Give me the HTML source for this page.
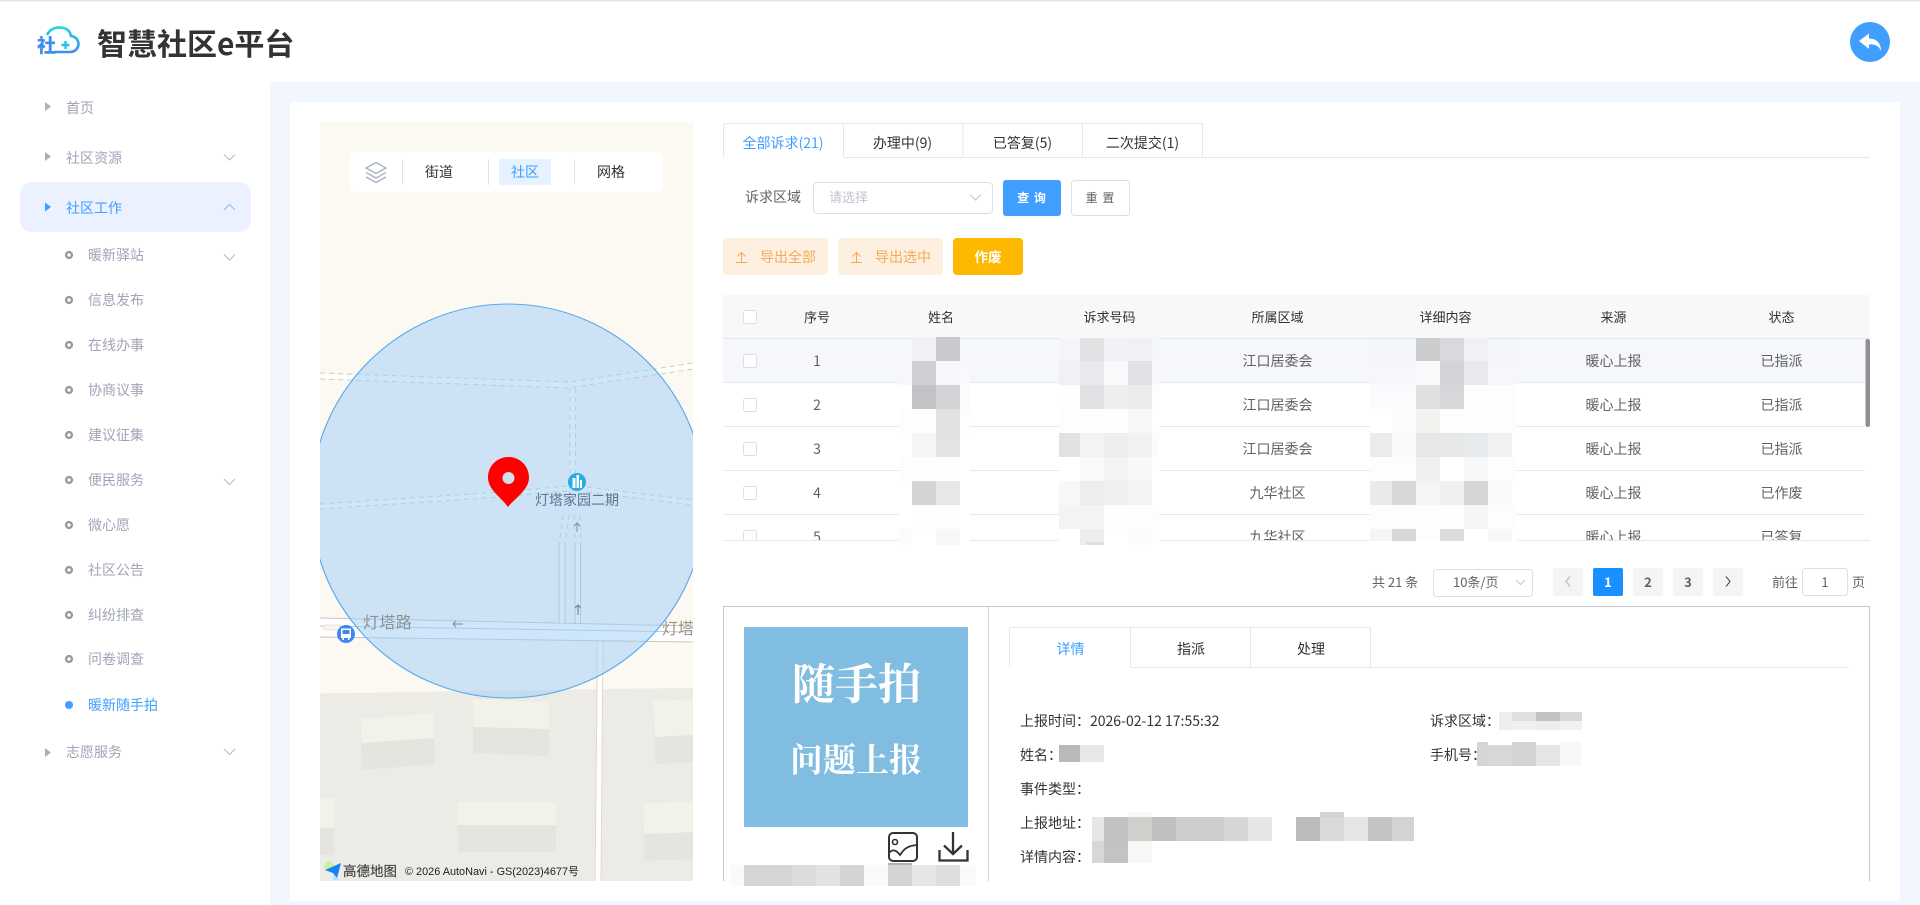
<!DOCTYPE html>
<html lang="zh-CN">
<head>
<meta charset="utf-8">
<title>智慧社区e平台</title>
<style>
html,body{margin:0;padding:0;background:#fff;width:1920px;height:905px;overflow:hidden}
svg{display:block;position:absolute;left:0;top:0}
text{font-family:"Noto Sans CJK SC","Liberation Sans",sans-serif;font-size:14px;white-space:pre}
.m{text-anchor:middle}
.nav{fill:#a0a4b7}
.h{font-size:13px;fill:#303133;text-anchor:middle}
.r{fill:#606266;text-anchor:middle}
.d{fill:#333}
.cb{fill:#fff;stroke:#dcdfe6;stroke-width:1}
.ch{fill:none;stroke:#b4b9c9;stroke-width:1}
.sep{stroke:#dfe4ec;stroke-width:1}
</style>
</head>
<body>
<svg width="1920" height="905" viewBox="0 0 1920 905" xmlns="http://www.w3.org/2000/svg">
<defs>
<clipPath id="mapc"><rect x="320" y="122" width="373" height="759"/></clipPath>
<clipPath id="tblc"><rect x="723" y="339" width="1147" height="201"/></clipPath>
<clipPath id="detc"><rect x="1010" y="700" width="850" height="163"/></clipPath>
<linearGradient id="cl" x1="0" y1="0" x2="0" y2="1"><stop offset="0" stop-color="#1fd3e6"/><stop offset="1" stop-color="#3d8ff2"/></linearGradient>
</defs>

<!-- page frame -->
<rect x="0" y="0" width="1920" height="905" fill="#fff"/>
<rect x="0" y="0" width="1920" height="1.5" fill="#e4e4e4"/>
<rect x="270" y="82" width="1650" height="823" fill="#f2f6fe"/>
<rect x="290" y="102" width="1610" height="799" fill="#fff"/>

<!-- logo -->
<path d="M47 35C49 31 53 27.5 59 27.5C65 27.5 70 30 71 36C74 36 78.5 39 78.5 44C78.5 47 76 52 70 52H54" fill="none" stroke="url(#cl)" stroke-width="2.6"/>
<text x="37" y="52" style="font-size:19px;font-weight:900;fill:#3f8ff0" transform="translate(0 0)">社</text>
<path d="M65.500 41V49M61.500 45H69.500" stroke="#22c4e8" stroke-width="2.400" fill="none"/>
<text x="97" y="55" style="font-size:30px;font-weight:700;fill:#333">智慧社区e平台</text>

<!-- back -->
<circle cx="1870" cy="42" r="20" fill="#409eff"/>
<path d="M1859 41L1869 33.500V38.500C1877 38.500 1881 44 1881 51C1879 46 1875 44 1869 44.500V49Z" fill="#fff"/>

<!-- sidebar -->
<rect x="20" y="182" width="231" height="50" rx="12" fill="#ebf1fe"/>
<path d="M45 102L51 106.500L45 111Z" fill="#a8afc0"/>
<path d="M45 152L51 156.500L45 161Z" fill="#a8afc0"/>
<path d="M45 202.500L51 207L45 211.500Z" fill="#409eff"/>
<path d="M45 748L51 752.500L45 757Z" fill="#a8afc0"/>
<text class="nav" x="66" y="113">首页</text>
<text class="nav" x="66" y="163">社区资源</text>
<text x="66" y="213" style="fill:#409eff">社区工作</text>
<text class="nav" x="88" y="260">暖新驿站</text>
<text class="nav" x="88" y="305">信息发布</text>
<text class="nav" x="88" y="350">在线办事</text>
<text class="nav" x="88" y="395">协商议事</text>
<text class="nav" x="88" y="440">建议征集</text>
<text class="nav" x="88" y="485">便民服务</text>
<text class="nav" x="88" y="530">微心愿</text>
<text class="nav" x="88" y="575">社区公告</text>
<text class="nav" x="88" y="620">纠纷排查</text>
<text class="nav" x="88" y="664">问卷调查</text>
<text x="88" y="710" style="fill:#409eff">暖新随手拍</text>
<text class="nav" x="66" y="757">志愿服务</text>
<g fill="none" stroke="#999" stroke-width="2.400">
<circle cx="69" cy="255" r="2.900"/><circle cx="69" cy="300" r="2.900"/><circle cx="69" cy="345" r="2.900"/><circle cx="69" cy="390" r="2.900"/><circle cx="69" cy="435" r="2.900"/><circle cx="69" cy="480" r="2.900"/><circle cx="69" cy="525" r="2.900"/><circle cx="69" cy="570" r="2.900"/><circle cx="69" cy="615" r="2.900"/><circle cx="69" cy="659" r="2.900"/>
</g>
<circle cx="69" cy="705" r="4" fill="#409eff"/>
<polyline class="ch" points="224,154.500 229.500,160 235,154.500"/>
<polyline class="ch" points="224,210 229.500,204.500 235,210" style="stroke:#8db8f5"/>
<polyline class="ch" points="224,254.500 229.500,260 235,254.500"/>
<polyline class="ch" points="224,479 229.500,484.500 235,479"/>
<polyline class="ch" points="224,749 229.500,754.500 235,749"/>

<!-- map -->
<g clip-path="url(#mapc)">
<rect x="320" y="122" width="373" height="759" fill="#fcf9f2"/>
<!-- ground -->
<path d="M320 693.500L597 689V881H320Z" fill="#ecebe6"/>
<path d="M602 689L693 688V881H600Z" fill="#ecebe6"/>
<!-- buildings -->
<g fill="#e5e4df">
<path d="M360 719L433 713L435 764L362 770Z"/><path d="M473 699L549 702V756L473 753Z"/><path d="M653 701L693 699V762L655 764Z"/><path d="M320 798H334V855H320Z"/><path d="M458 802H556V852H458Z"/><path d="M643 803L693 802V859L644 861Z"/>
</g>
<g fill="#f2f1ea">
<path d="M360 719L433 713L434 738L362 743Z"/><path d="M473 699L549 702V729L473 727Z"/><path d="M653 701L693 699V735L655 737Z"/><path d="M320 798H334V828H320Z"/><path d="M458 802H556V825H458Z"/><path d="M643 803L693 802V832L644 834Z"/>
</g>
<!-- roads -->
<path d="M320 376L572 385L693 366M320 506.500L500 494.500L570 487L590 489L693 502.500M572.500 385V488" fill="none" stroke="#fff" stroke-opacity=".75" stroke-width="5"/>
<g fill="none" stroke="#cfccbf" stroke-width="1" stroke-dasharray="5 4">
<path d="M320 373L570 382L693 363M320 379L568 388L693 369"/>
<path d="M320 504L500 492L567 486M320 509L500 497L567 491M587 487L693 500M587 492L693 505"/>
<path d="M570 388V487M575.500 388V487"/>
<path d="M563 515L559 545M569 515L565 545M574 515L575 545M580 515L581 545"/>
</g>
<path d="M598 638H602.500L601 881H595.500Z" fill="#fff"/>
<path d="M597.500 640L595 881M603 640L601 881" fill="none" stroke="#e0dacb" stroke-width="1"/>
<path d="M320 618L693 626V642L320 637Z" fill="#fff"/>
<path d="M320 618L693 626M320 637L693 642M320 626L693 632" fill="none" stroke="#c9c5b8" stroke-width="1"/>
<rect x="324" y="625" width="16" height="5" fill="#f8f5ec" stroke="#dfdccf" stroke-width=".7"/>
<rect x="559" y="545" width="6" height="78" fill="#fbfbfb"/>
<rect x="575" y="545" width="5.500" height="78" fill="#fff"/>
<path d="M559 545V623M565 545V623M575 545V623M580.500 545V624" stroke="#c4c2b6" stroke-width="1" fill="none"/>
<!-- radius -->
<circle cx="508" cy="501" r="197" fill="#9ecdf8" fill-opacity=".5" stroke="#55a9f0" stroke-width="1.100"/>
<!-- labels -->
<text x="363" y="628" style="font-size:16px;letter-spacing:.4px;fill:#8b9298">灯塔路</text>
<text x="662" y="634" style="font-size:16px;fill:#9c978c">灯塔</text>
<path d="M463 624H453M456 621L453 624L456 627" fill="none" stroke="#7e8da0" stroke-width="1"/>
<path d="M577 532V523M574 526L577 523L580 526" fill="none" stroke="#7e8da0" stroke-width="1"/>
<path d="M578 615V605M575 608L578 605L581 608" fill="none" stroke="#7e8da0" stroke-width="1.300"/>
<circle cx="577" cy="482" r="9" fill="#25ade6"/>
<path d="M572.500 488V478H575.500V488ZM576.500 488V475H579V488ZM580 488V480H582V488Z" fill="#fff"/>
<text class="m" x="577" y="505" style="fill:#5b7590">灯塔家园二期</text>
<circle cx="346" cy="634" r="9" fill="#3f86f5"/>
<path d="M341 628.500H351V638H349.500V640H348V638H344V640H342.500V638H341Z" fill="#fff"/>
<rect x="342.500" y="630" width="7" height="4" fill="#3f86f5"/>
<!-- pin -->
<path d="M508 507C502 498 488 490 488 477.500C488 466 497 457 508.500 457C520 457 529 466 529 477.500C529 490 515 498 508 507Z" fill="#f00"/>
<circle cx="508.500" cy="478" r="6" fill="#cfdfee"/>
<!-- amap -->
<circle cx="329" cy="866" r="5" fill="#c9f0a5"/>
<path d="M341 863L337 878L333 873L325 870Z" fill="#1582f5"/>
<path d="M333 873L337 878L339 880L333 880Z" fill="#a6e6ff"/>
<text x="343" y="876" style="font-size:13.500px;fill:#444;stroke:#444;stroke-width:.2">高德地图</text>
<text x="405" y="875" style="font-family:'Liberation Sans','Noto Sans CJK SC',sans-serif;font-size:10.900px;fill:#222">© 2026 AutoNavi - GS(2023)4677号</text>
</g>

<!-- map control -->
<rect x="349" y="152" width="314" height="40" rx="6" fill="#fff"/>
<g fill="none" stroke="#a5aec0" stroke-width="1.300">
<path d="M376 162.500L386 168L376 173.500L366 168Z"/><path d="M366 172.500L376 178L386 172.500"/><path d="M366 177L376 182.500L386 177"/>
</g>
<path class="sep" d="M402.500 159V185M488.500 159V185M574.500 159V185"/>
<rect x="499" y="159" width="52" height="26" rx="2" fill="#e6f2ff"/>
<text class="m d" x="439" y="177">街道</text>
<text class="m" x="525" y="177" style="fill:#409eff">社区</text>
<text class="m d" x="611" y="177">网格</text>

<!-- tabs -->
<path d="M723.500 157.500V125.500Q723.500 123.500 725.500 123.500H843.500V157M844.500 123.500H963V157M964.500 123.500H1082.500V157M1083.500 123.500H1202.500V157" fill="none" stroke="#e4e7ed"/>
<path d="M843.500 157.500H1870" stroke="#e4e7ed"/>
<text class="m" x="783" y="148" style="fill:#409eff">全部诉求(21)</text>
<text class="m" x="902.500" y="148" fill="#303133">办理中(9)</text>
<text class="m" x="1022.500" y="148" fill="#303133">已答复(5)</text>
<text class="m" x="1142.500" y="148" fill="#303133">二次提交(1)</text>

<!-- filter -->
<text x="745" y="202" fill="#606266">诉求区域</text>
<rect x="813.500" y="182.500" width="179" height="31" rx="4" fill="#fff" stroke="#dcdfe6"/>
<text x="829" y="202" style="font-size:13px;fill:#c0c4cc">请选择</text>
<polyline class="ch" style="stroke:#c0c4cc" points="970,194.500 975.500,200 981,194.500"/>
<rect x="1003" y="180" width="58" height="36" rx="3" fill="#409eff"/>
<text class="m" x="1032" y="202" style="font-size:12px;font-weight:700;fill:#fff;letter-spacing:1px">查 询</text>
<rect x="1071.500" y="180.500" width="58" height="35" rx="3" fill="#fff" stroke="#dcdfe6"/>
<text class="m" x="1100.500" y="202" style="font-size:12px;fill:#606266;letter-spacing:1px">重 置</text>

<!-- action buttons -->
<rect x="723" y="238" width="105" height="37" rx="4" fill="#fdf0e1"/>
<rect x="838" y="238" width="105" height="37" rx="4" fill="#fdf0e1"/>
<rect x="953" y="238" width="70" height="37" rx="4" fill="#ffb800"/>
<path d="M741.500 262V253M737.500 256.500L741.500 252.500L745.500 256.500M736 262.500H747M856.500 262V253M852.500 256.500L856.500 252.500L860.500 256.500M851 262.500H862" fill="none" stroke="#f3a94c" stroke-width="1"/>
<text x="760" y="262" style="fill:#f3ab55">导出全部</text>
<text x="875" y="262" style="fill:#f3ab55">导出选中</text>
<text class="m" x="988" y="262" style="font-weight:700;fill:#fff;font-size:13.500px">作废</text>

<!-- table -->
<rect x="723" y="295" width="1147" height="43" fill="#f7f8f9"/>
<rect x="723" y="338" width="1147" height="45" fill="#f5f7fa"/>
<path d="M723 338.500H1870" stroke="#e2e8f0"/>
<path d="M723 382.500H1865M723 426.500H1865M723 470.500H1865M723 514.500H1865" stroke="#e4e8f0"/>
<rect class="cb" x="743.500" y="310.500" width="13" height="13" rx="2"/>
<text class="h" x="817" y="322">序号</text>
<text class="h" x="941" y="322">姓名</text>
<text class="h" x="1109.500" y="322">诉求号码</text>
<text class="h" x="1277.500" y="322">所属区域</text>
<text class="h" x="1445.500" y="322">详细内容</text>
<text class="h" x="1613.500" y="322">来源</text>
<text class="h" x="1781.500" y="322">状态</text>
<g clip-path="url(#tblc)">
<rect class="cb" x="743.500" y="354.500" width="13" height="13" rx="2"/>
<rect class="cb" x="743.500" y="398.500" width="13" height="13" rx="2"/>
<rect class="cb" x="743.500" y="442.500" width="13" height="13" rx="2"/>
<rect class="cb" x="743.500" y="486.500" width="13" height="13" rx="2"/>
<rect class="cb" x="743.500" y="530.500" width="13" height="13" rx="2"/>
<text class="r" x="817" y="366">1</text><text class="r" x="817" y="410">2</text><text class="r" x="817" y="454">3</text><text class="r" x="817" y="498">4</text><text class="r" x="817" y="542">5</text>
<text class="r" x="1277.500" y="366">江口居委会</text><text class="r" x="1277.500" y="410">江口居委会</text><text class="r" x="1277.500" y="454">江口居委会</text><text class="r" x="1277.500" y="498">九华社区</text><text class="r" x="1277.500" y="542">九华社区</text>
<text class="r" x="1613.500" y="366">暖心上报</text><text class="r" x="1613.500" y="410">暖心上报</text><text class="r" x="1613.500" y="454">暖心上报</text><text class="r" x="1613.500" y="498">暖心上报</text><text class="r" x="1613.500" y="542">暖心上报</text>
<text class="r" x="1781.500" y="366">已指派</text><text class="r" x="1781.500" y="410">已指派</text><text class="r" x="1781.500" y="454">已指派</text><text class="r" x="1781.500" y="498">已作废</text><text class="r" x="1781.500" y="542">已答复</text>
</g>
<path d="M723 540.500H1870" stroke="#e4e8f0"/>
<rect x="1865.500" y="339" width="4.500" height="88" rx="2.200" fill="#909090"/>

<!-- mosaic: name col -->
<g shape-rendering="crispEdges">
<rect x="899" y="383" width="71" height="162" fill="#fff"/>
<path fill="#f0f1f4" d="M912 337h24v24h-24z"/><path fill="#c9cacd" d="M936 337h24v24h-24z"/><path fill="#f5f7fa" d="M899 339h13v46h-13zM960 339h10v22h-10z"/>
<path fill="#cfd0d4" d="M912 361h24v24h-24z"/><path fill="#f6f7fa" d="M936 361h24v24h-24z"/><path fill="#f8f9fc" d="M960 361h10v24h-10z"/>
<path fill="#c2c3c5" d="M912 385h24v24h-24z"/><path fill="#d3d4d6" d="M936 385h24v24h-24z"/><path fill="#fcfcfc" d="M960 385h10v24h-10z"/>
<path fill="#fdfdfd" d="M899 409h37v24h-37zM960 409h10v24h-10z"/><path fill="#e2e2e3" d="M936 409h24v24h-24z"/>
<path fill="#f5f5f5" d="M912 433h24v24h-24z"/><path fill="#e3e3e4" d="M936 433h24v24h-24z"/>
<path fill="#fdfdfd" d="M899 457h61v24h-61z"/>
<path fill="#d3d4d6" d="M912 481h24v24h-24z"/><path fill="#e6e7e9" d="M936 481h24v24h-24z"/>
<path fill="#fdfdfd" d="M912 505h48v24h-48z"/>
<path fill="#fbfbfb" d="M899 529h13v16h-13z"/><path fill="#f7f8fa" d="M936 529h24v16h-24z"/>

<!-- code col -->
<rect x="1059" y="383" width="100" height="162" fill="#fff"/>
<path fill="#f3f5f8" d="M1059 338h21v23h-21z"/><path fill="#e1e2e4" d="M1080 338h24v23h-24z"/><path fill="#f0f2f5" d="M1104 338h24v23h-24z"/><path fill="#eff1f4" d="M1128 338h24v23h-24z"/><path fill="#f4f6f9" d="M1152 338h7v23h-7z"/>
<path fill="#f0f1f4" d="M1059 361h21v24h-21z"/><path fill="#e8e9ec" d="M1080 361h24v24h-24z"/><path fill="#f8f9fb" d="M1104 361h24v24h-24zM1152 361h7v24h-7z"/><path fill="#dfe1e4" d="M1128 361h24v24h-24z"/>
<path fill="#fefefc" d="M1059 385h21v24h-21z"/><path fill="#e0e1e3" d="M1080 385h24v24h-24z"/><path fill="#eeefed" d="M1104 385h24v24h-24z"/><path fill="#ebebea" d="M1128 385h24v24h-24z"/><path fill="#fdfdfd" d="M1152 385h7v24h-7z"/>
<path fill="#fdfdfd" d="M1059 409h69v24h-69z"/><path fill="#f6f7f7" d="M1128 409h24v24h-24z"/>
<path fill="#e2e2e2" d="M1059 433h21v24h-21z"/><path fill="#f3f3f1" d="M1080 433h24v24h-24z"/><path fill="#ededeb" d="M1104 433h24v24h-24z"/><path fill="#f1f2f3" d="M1128 433h24v24h-24z"/><path fill="#fbfbfb" d="M1152 433h7v24h-7z"/>
<path fill="#f9f9f9" d="M1080 457h24v24h-24z"/><path fill="#f3f3f3" d="M1104 457h24v24h-24z"/><path fill="#f8f8f8" d="M1128 457h24v24h-24z"/>
<path fill="#f8f8f8" d="M1059 481h21v24h-21z"/><path fill="#ededed" d="M1080 481h24v24h-24z"/><path fill="#f0f0f0" d="M1104 481h24v24h-24z"/><path fill="#f4f4f4" d="M1128 481h24v24h-24z"/>
<path fill="#f3f3f3" d="M1059 505h45v24h-45z"/><path fill="#fdfdfd" d="M1104 505h55v24h-55z"/>
<path fill="#eceeee" d="M1080 529h24v16h-24z"/><path fill="#fcfcfc" d="M1128 529h24v16h-24z"/><path fill="#e0e0e0" d="M1086 542h18v3h-18z"/>

<!-- detail col -->
<rect x="1370" y="383" width="147" height="159" fill="#fff"/>
<path fill="#f4f6fa" d="M1370 339h46v22h-46zM1488 339h29v22h-29z"/><path fill="#cbccce" d="M1416 338h24v23h-24z"/><path fill="#d8d9dc" d="M1440 338h24v23h-24z"/><path fill="#f0f1f4" d="M1464 338h24v23h-24z"/>
<path fill="#f5f7fa" d="M1370 361h46v24h-46zM1488 361h29v24h-29z"/><path fill="#f9fafc" d="M1416 361h24v24h-24z"/><path fill="#d3d4d8" d="M1440 361h24v24h-24z"/><path fill="#e8e9ed" d="M1464 361h24v24h-24z"/>
<path fill="#fafbfd" d="M1370 385h46v24h-46z"/><path fill="#e0e0e1" d="M1416 385h24v24h-24z"/><path fill="#d6d7d9" d="M1440 385h24v24h-24z"/><path fill="#fdfdfd" d="M1464 385h53v24h-53z"/>
<path fill="#fcfcfc" d="M1392 409h24v24h-24z"/><path fill="#f3f2ef" d="M1416 409h24v24h-24z"/><path fill="#fdfdfd" d="M1440 409h77v24h-77z"/>
<path fill="#ebebeb" d="M1370 433h22v24h-22z"/><path fill="#fafafa" d="M1392 433h24v24h-24z"/><path fill="#e6e7e8" d="M1416 433h24v24h-24z"/><path fill="#e7e8e8" d="M1440 433h24v24h-24z"/><path fill="#e6eaec" d="M1464 433h24v24h-24z"/><path fill="#f0f1f2" d="M1488 433h24v24h-24z"/>
<path fill="#fdfdfd" d="M1370 457h46v24h-46zM1488 457h29v24h-29z"/><path fill="#f0f0f0" d="M1416 457h24v24h-24z"/><path fill="#f8f8f8" d="M1464 457h24v24h-24z"/>
<path fill="#ebeae8" d="M1370 481h22v24h-22z"/><path fill="#d8d8d6" d="M1392 481h24v24h-24z"/><path fill="#f5f5f5" d="M1416 481h24v24h-24z"/><path fill="#eff0f1" d="M1440 481h24v24h-24z"/><path fill="#d5d5d5" d="M1464 481h24v24h-24z"/><path fill="#f9f9f9" d="M1488 481h24v24h-24z"/>
<path fill="#fdfdfd" d="M1370 505h94v24h-94zM1488 505h29v24h-29z"/><path fill="#f6f6f6" d="M1464 505h24v24h-24z"/>
<path fill="#f6f6f4" d="M1370 529h22v12h-22z"/><path fill="#d8d8d8" d="M1392 529h24v12h-24z"/><path fill="#fdfdfd" d="M1416 529h24v12h-24z"/><path fill="#dcdcdc" d="M1440 529h24v12h-24z"/><path fill="#f8f8f8" d="M1488 529h24v12h-24z"/>
</g>

<!-- pagination -->
<text x="1372" y="587" style="font-size:13px;fill:#606266">共 21 条</text>
<rect x="1433.500" y="569.500" width="99" height="27" rx="3" fill="#fff" stroke="#dcdfe6"/>
<text x="1453" y="587" style="font-size:13px;fill:#606266">10条/页</text>
<polyline class="ch" style="stroke:#c0c4cc" points="1516,580 1520.500,584.500 1525,580"/>
<rect x="1553" y="568" width="30" height="28" rx="2" fill="#f4f4f5"/>
<rect x="1593" y="568" width="30" height="28" rx="2" fill="#1890ff"/>
<rect x="1633" y="568" width="30" height="28" rx="2" fill="#f4f4f5"/>
<rect x="1673" y="568" width="30" height="28" rx="2" fill="#f4f4f5"/>
<rect x="1713" y="568" width="30" height="28" rx="2" fill="#f4f4f5"/>
<polyline points="1570,576.500 1566,581.500 1570,586.500" fill="none" stroke="#c0c4cc" stroke-width="1.500"/>
<polyline points="1726,576.500 1730,581.500 1726,586.500" fill="none" stroke="#303133" stroke-width="1"/>
<text class="m" x="1608" y="587" style="font-size:13px;font-weight:700;fill:#fff">1</text>
<text class="m" x="1648" y="587" style="font-size:13px;font-weight:700;fill:#606266">2</text>
<text class="m" x="1688" y="587" style="font-size:13px;font-weight:700;fill:#606266">3</text>
<text x="1772" y="587" style="font-size:13px;fill:#606266">前往</text>
<rect x="1802.500" y="568.500" width="45" height="27" rx="3" fill="#fff" stroke="#dcdfe6"/>
<text class="m" x="1825" y="587" style="font-size:13px;fill:#606266">1</text>
<text x="1852" y="587" style="font-size:13px;fill:#606266">页</text>

<!-- bottom box -->
<path d="M723.500 881V606.500H1869.500V881" fill="none" stroke="#c1c7d0" stroke-width="1"/>
<path d="M988.500 607V881" fill="none" stroke="#d0d5dc" stroke-width="1"/>
<rect x="744" y="627" width="224" height="200" fill="#80bde0"/>
<text class="m" x="856.500" y="699.500" style="font-family:'Noto Serif CJK SC','Liberation Serif',serif;font-size:43px;font-weight:700;fill:#fff">随手拍</text>
<text class="m" x="856" y="771.500" style="font-family:'Noto Serif CJK SC','Liberation Serif',serif;font-size:33px;font-weight:700;fill:#fff">问题上报</text>

<rect x="889" y="833" width="28" height="28" rx="4" fill="none" stroke="#333" stroke-width="2"/>
<circle cx="895" cy="842" r="2.500" fill="none" stroke="#333" stroke-width="1.600"/>
<path d="M889 853C893 848 897 851 900 855C903 851 905 846 917 845" fill="none" stroke="#333" stroke-width="1.800"/>
<path d="M953 832V853M944 845.500L953 854L962 845.500M939.500 850V860.500H967.500V850" fill="none" stroke="#333" stroke-width="2.300"/>

<g shape-rendering="crispEdges">
<path fill="#b0b0b0" d="M888 863h24v2h-24z"/>
<path fill="#fafafa" d="M731 865h13v21h-13zM864 865h24v21h-24zM960 865h16v21h-16z"/>
<path fill="#d5d5d7" d="M744 865h48v21h-48z"/><path fill="#dcdcdf" d="M792 865h24v21h-24z"/><path fill="#e3e2e0" d="M816 865h24v21h-24z"/><path fill="#d4d4d4" d="M840 865h24v21h-24zM888 865h24v21h-24z"/><path fill="#e6e6e6" d="M912 865h24v21h-24z"/><path fill="#dededc" d="M936 865h24v21h-24z"/>
</g>

<!-- detail tabs -->
<path d="M1009.500 667V629.500Q1009.500 627.500 1011.500 627.500H1368.500Q1370.500 627.500 1370.500 629.500V667M1130.500 628V667M1250.500 628V667" fill="none" stroke="#e4e7ed"/>
<path d="M1130.500 667.500H1849" stroke="#e4e7ed"/>
<text class="m" x="1070.500" y="654" style="fill:#409eff">详情</text>
<text class="m" x="1191" y="654" fill="#303133">指派</text>
<text class="m" x="1311" y="654" fill="#303133">处理</text>

<!-- detail info -->
<g clip-path="url(#detc)">
<text class="d" x="1020" y="726">上报时间：2026-02-12 17:55:32</text>
<text class="d" x="1020" y="760">姓名：</text>
<text class="d" x="1020" y="794">事件类型：</text>
<text class="d" x="1020" y="828">上报地址：</text>
<text class="d" x="1020" y="862">详情内容：</text>
<text class="d" x="1430" y="726">诉求区域：</text>
<text class="d" x="1430" y="760">手机号：</text>
</g>
<g shape-rendering="crispEdges">
<path fill="#b9b9ba" d="M1059 745h21v17h-21z"/><path fill="#e8e8e8" d="M1080 745h24v17h-24z"/>
<path fill="#f7f7f7" d="M1128 812h24v5h-24z"/><path fill="#d3d3d3" d="M1320 812h24v5h-24z"/>
<path fill="#e6e6e6" d="M1092 817h12v24h-12z"/><path fill="#c2c2c2" d="M1104 817h24v24h-24z"/><path fill="#d1cfcb" d="M1128 817h24v24h-24z"/><path fill="#bebfc1" d="M1152 817h24v24h-24z"/><path fill="#cdcdcd" d="M1176 817h48v24h-48z"/><path fill="#d6d6d6" d="M1224 817h24v24h-24z"/><path fill="#e6e6e8" d="M1248 817h24v24h-24z"/>
<path fill="#bcbcbc" d="M1296 817h24v24h-24z"/><path fill="#dad9d7" d="M1320 817h24v24h-24z"/><path fill="#e5e5e5" d="M1344 817h24v24h-24z"/><path fill="#c5c4c2" d="M1368 817h24v24h-24z"/><path fill="#d3d3d3" d="M1392 817h22v24h-22z"/>
<path fill="#d7d7d7" d="M1092 841h12v22h-12z"/><path fill="#c3c3c3" d="M1104 841h24v22h-24z"/><path fill="#f8f8f8" d="M1128 841h24v22h-24z"/>
<path fill="#eee" d="M1499 712h13v18h-13z"/><path fill="#e0e0e0" d="M1512 712h24v9h-24z"/><path fill="#c2c2c2" d="M1536 712h24v9h-24z"/><path fill="#d8d8da" d="M1560 712h22v9h-22z"/>
<path fill="#f1f1f1" d="M1512 721h24v9h-24z"/><path fill="#eee" d="M1536 721h24v9h-24z"/><path fill="#f2f2f2" d="M1560 721h22v9h-22z"/>
<path fill="#d5d5d5" d="M1477 742h11v24h-11z"/><path fill="#d9d8d6" d="M1488 745h24v21h-24z"/><path fill="#d4d4d4" d="M1512 742h24v24h-24z"/><path fill="#e6e5e4" d="M1536 745h24v21h-24z"/><path fill="#f8f8f8" d="M1560 742h21v24h-21z"/>
</g>
</svg>
</body>
</html>
